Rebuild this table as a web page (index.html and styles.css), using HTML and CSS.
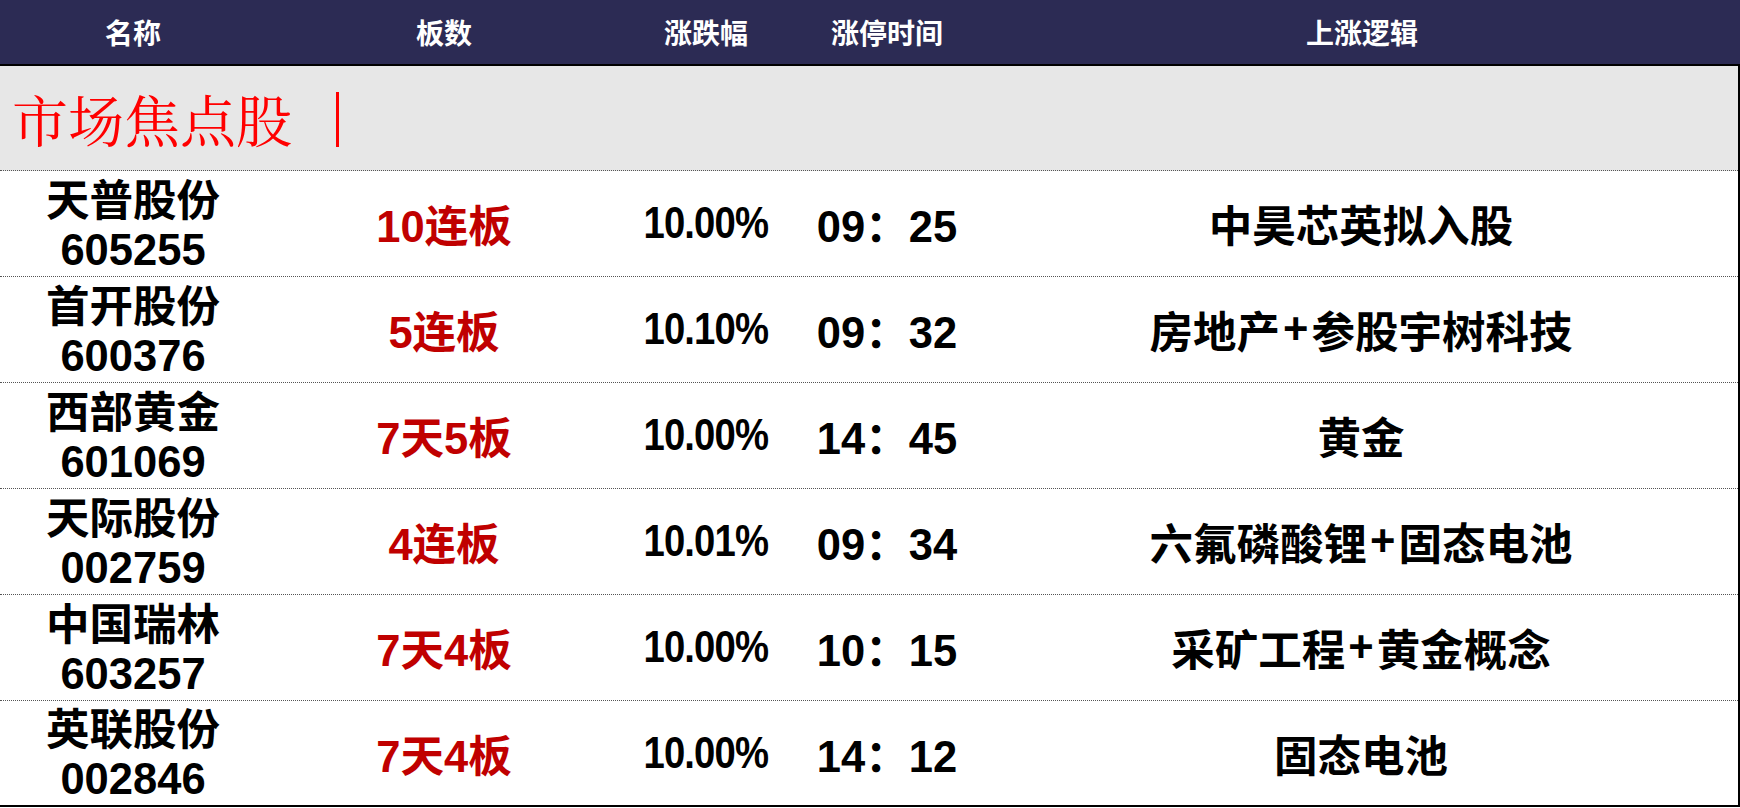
FILE: index.html
```html
<!DOCTYPE html>
<html lang="zh-CN">
<head>
<meta charset="utf-8">
<title>市场焦点股</title>
<link rel="stylesheet" href="styles.css">
</head>
<body>
<div class="sheet">
  <div class="row head">
    <div class="cell">名称</div>
    <div class="cell">板数</div>
    <div class="cell">涨跌幅</div>
    <div class="cell">涨停时间</div>
    <div class="cell">上涨逻辑</div>
  </div>
  <div class="body">
    <div class="focus"><span class="focus-title">市场焦点股</span><span class="focus-bar"></span></div>

    <div class="row data">
      <div class="cell name"><span>天普股份</span><span>605255</span></div>
      <div class="cell board">10连板</div>
      <div class="cell pct"><span>10.00%</span></div>
      <div class="cell time">09：25</div>
      <div class="cell logic">中昊芯英拟入股</div>
    </div>
    <div class="row data">
      <div class="cell name"><span>首开股份</span><span>600376</span></div>
      <div class="cell board">5连板</div>
      <div class="cell pct"><span>10.10%</span></div>
      <div class="cell time">09：32</div>
      <div class="cell logic">房地产<span class="plus">+</span>参股宇树科技</div>
    </div>
    <div class="row data">
      <div class="cell name"><span>西部黄金</span><span>601069</span></div>
      <div class="cell board">7天5板</div>
      <div class="cell pct"><span>10.00%</span></div>
      <div class="cell time">14：45</div>
      <div class="cell logic">黄金</div>
    </div>
    <div class="row data">
      <div class="cell name"><span>天际股份</span><span>002759</span></div>
      <div class="cell board">4连板</div>
      <div class="cell pct"><span>10.01%</span></div>
      <div class="cell time">09：34</div>
      <div class="cell logic">六氟磷酸锂<span class="plus">+</span>固态电池</div>
    </div>
    <div class="row data">
      <div class="cell name"><span>中国瑞林</span><span>603257</span></div>
      <div class="cell board">7天4板</div>
      <div class="cell pct"><span>10.00%</span></div>
      <div class="cell time">10：15</div>
      <div class="cell logic">采矿工程<span class="plus">+</span>黄金概念</div>
    </div>
    <div class="row data last">
      <div class="cell name"><span>英联股份</span><span>002846</span></div>
      <div class="cell board">7天4板</div>
      <div class="cell pct"><span>10.00%</span></div>
      <div class="cell time">14：12</div>
      <div class="cell logic">固态电池</div>
    </div>
  </div>
</div>
</body>
</html>
```

FILE: styles.css
```css
html, body {
  margin: 0;
  padding: 0;
  background: #ffffff;
}

.sheet {
  width: 1740px;
  height: 808px;
  font-family: "Liberation Sans", "Noto Sans CJK SC", sans-serif;
  color: #000000;
}

.row {
  display: grid;
  grid-template-columns: 266px 356px 168px 194px 1fr;
}

.cell {
  display: flex;
  align-items: center;
  justify-content: center;
  text-align: center;
  white-space: nowrap;
}

.head {
  height: 64px;
  background: #2c2b54;
  border-bottom: 2px solid #000000;
  color: #ffffff;
  font-family: "Noto Sans CJK SC", sans-serif;
  font-weight: 700;
  font-size: 28px;
}

.body {
  width: 1738px;
  border-right: 2px solid #000000;
}

.focus {
  height: 104px;
  background: #e7e7e7;
  border-bottom: 1px dotted #555555;
  display: flex;
  align-items: center;
  padding-left: 12px;
}

.focus-title {
  font-family: "Noto Serif CJK SC", "Liberation Serif", "Noto Sans CJK SC", serif;
  font-weight: 400;
  font-size: 56px;
  color: #ff0000;
  line-height: 1;
}

.focus-bar {
  display: inline-block;
  width: 3px;
  height: 55px;
  background: #ff0000;
  margin-left: 44px;
  margin-top: 2px;
}

.data {
  height: 105px;
  border-bottom: 1px dotted #555555;
  font-weight: 700;
  font-size: 43.5px;
}

.data.last {
  height: 104px;
  border-bottom: 2px solid #000000;
}

.name {
  flex-direction: column;
  line-height: 49px;
  padding-top: 4px;
}

.board {
  color: #c00000;
}

.pct span {
  display: inline-block;
  letter-spacing: -1px;
  transform: scaleX(0.88);
}

.plus {
  margin: 0 3px;
}
```
